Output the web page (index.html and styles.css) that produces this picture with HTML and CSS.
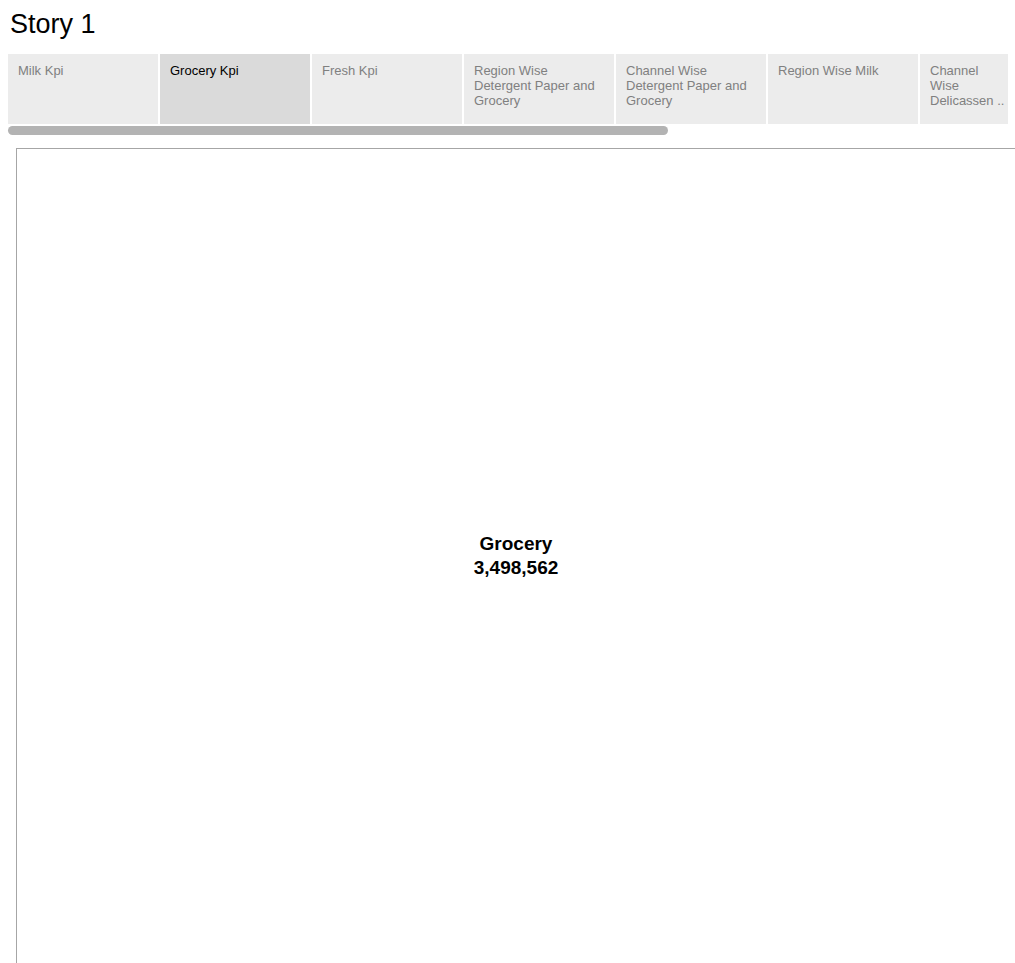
FILE: index.html
```html
<!DOCTYPE html>
<html>
<head lang="en">
    <meta charset="UTF-8">
    <title>Story 1</title>
    <link rel="stylesheet" href="styles.css">
</head>
<body>

<div id="story">
    <h1 class="story-title">Story 1</h1>

    <ul class="tabs">
        <li>Milk Kpi</li>
        <li class="current">Grocery Kpi</li>
        <li>Fresh Kpi</li>
        <li>Region Wise Detergent Paper and Grocery</li>
        <li>Channel Wise Detergent Paper and Grocery</li>
        <li>Region Wise Milk</li>
        <li class="last">Channel Wise Delicassen&nbsp;..</li>
    </ul>
    <div class="scroll">
        <div class="thumb"></div>
    </div>

    <div class="sheet">
        <div class="kpi">
            <div>Grocery</div>
            <div>3,498,562</div>
        </div>
    </div>
</div>

</body>
</html>
```

FILE: styles.css
```css
 body{
     margin: 0;
     font-family: "Liberation Sans", Arial, sans-serif;
     background: #fff;
     overflow: hidden;
 }
 #story{
     padding-left: 8px;
 }
 .story-title{
     margin: 8px 0 0 2px;
     font-size: 27px;
     font-weight: normal;
     line-height: 32px;
     color: #000;
 }
 .tabs{
     display: flex;
     gap: 2px;
     width: 1000px;
     margin: 14px 0 0 0;
     padding: 0;
     list-style: none;
     overflow: hidden;
 }
 .tabs li{
     flex: 0 0 150px;
     box-sizing: border-box;
     height: 70px;
     padding: 9px 10px 0 10px;
     background: #ececec;
     color: #808080;
     font-size: 13px;
     line-height: 15px;
 }
 .tabs li.current{
     background: #dadada;
     color: #000;
 }
 .tabs li.last{
     flex-basis: 88px;
     padding-right: 0;
 }
 .scroll{
     width: 1000px;
     height: 9px;
     margin-top: 2px;
 }
 .thumb{
     width: 660px;
     height: 9px;
     border-radius: 5px;
     background: #b3b3b3;
 }
 .sheet{
     display: flex;
     align-items: center;
     justify-content: center;
     width: 998px;
     height: 814px;
     padding-bottom: 1px;
     margin: 13px 0 0 8px;
     border-top: 1px solid #a6a6a6;
     border-left: 1px solid #a6a6a6;
 }
 .kpi{
     text-align: center;
     font-size: 19px;
     font-weight: bold;
     line-height: 24px;
     color: #000;
 }
```
